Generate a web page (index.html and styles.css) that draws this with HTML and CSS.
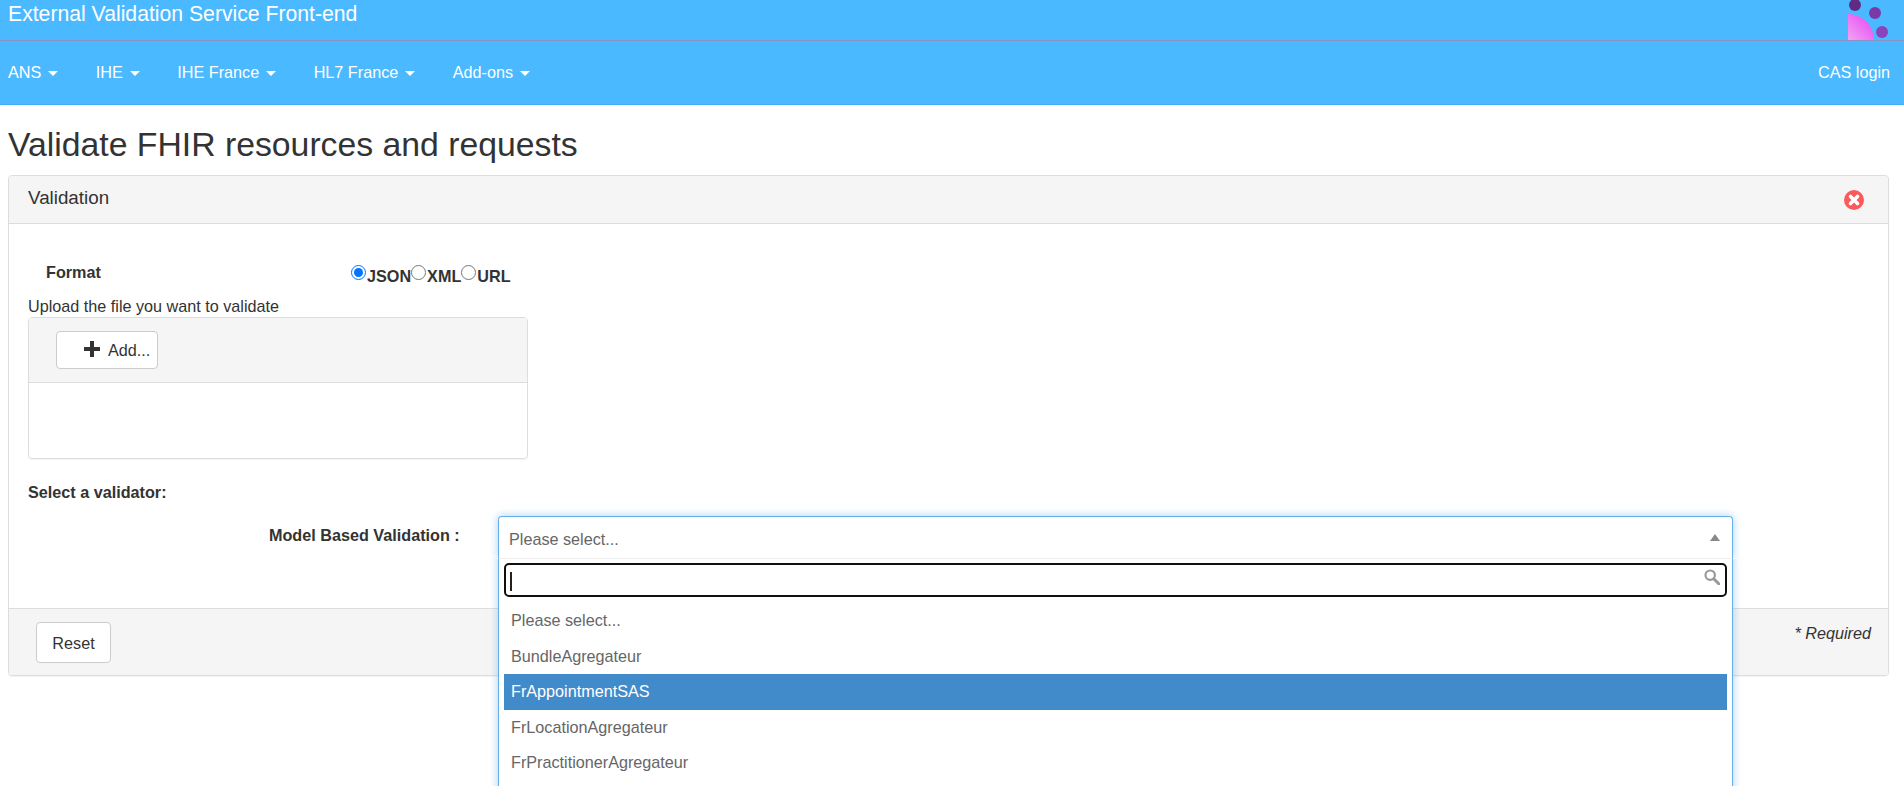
FILE: index.html
```html
<!DOCTYPE html>
<html lang="en">
<head>
<meta charset="utf-8">
<title>Validate FHIR resources and requests</title>
<link rel="stylesheet" href="styles.css">
</head>
<body>
<header class="topbar">
  <div class="brand-row">
    <a class="brand">External Validation Service Front-end</a>
    <svg class="logo" viewBox="0 0 56 40" width="56" height="40" aria-hidden="true">
      <defs>
        <linearGradient id="pink" x1="0" y1="1" x2="1" y2="0">
          <stop offset="0" stop-color="#f2a4f4"/>
          <stop offset="0.6" stop-color="#ea68f2"/>
          <stop offset="1" stop-color="#e050f0"/>
        </linearGradient>
      </defs>
      <path d="M8 14 A26 26 0 0 1 34 40 L8 40 Z" fill="url(#pink)"/>
      <circle cx="15" cy="5" r="6" fill="#5f2b85"/>
      <circle cx="35" cy="13" r="6" fill="#7a3aa6"/>
      <circle cx="42" cy="32" r="6" fill="#8b43bb"/>
    </svg>
  </div>
  <nav class="nav-row">
    <ul class="menu">
      <li class="menu-item">ANS<span class="caret"></span></li>
      <li class="menu-item">IHE<span class="caret"></span></li>
      <li class="menu-item">IHE France<span class="caret"></span></li>
      <li class="menu-item">HL7 France<span class="caret"></span></li>
      <li class="menu-item">Add-ons<span class="caret"></span></li>
    </ul>
    <a class="login">CAS login</a>
  </nav>
</header>
<main class="page">
  <h1 class="title">Validate FHIR resources and requests</h1>
  <section class="panel">
    <div class="panel-head">
      <h2 class="panel-title">Validation</h2>
      <svg class="close" viewBox="0 0 20 20" width="20" height="20" aria-hidden="true">
        <circle cx="10" cy="10" r="10" fill="#fb5a5c"/>
        <path d="M6.5 6.5 L13.5 13.5 M13.5 6.5 L6.5 13.5" stroke="#fff" stroke-width="3.6" stroke-linecap="round"/>
      </svg>
    </div>
    <div class="panel-body">
      <div class="format-row">
        <span class="format-label">Format</span>
        <div class="radios">
          <input class="radio" type="radio" name="format" checked><span class="radio-text">JSON</span>
          <input class="radio" type="radio" name="format"><span class="radio-text">XML</span>
          <input class="radio" type="radio" name="format"><span class="radio-text">URL</span>
        </div>
      </div>
      <div class="upload-label">Upload the file you want to validate</div>
      <div class="upload">
        <div class="upload-head">
          <button class="btn add-btn" type="button">
            <svg class="plus" viewBox="0 0 16 16" width="16" height="16" aria-hidden="true"><path d="M6 0h4v6h6v4h-6v6H6v-6H0V6h6z" fill="#333"/></svg>Add...
          </button>
        </div>
        <div class="upload-body"></div>
      </div>
      <div class="validator-label">Select a validator:</div>
      <div class="validator-row">
        <label class="model-label">Model Based Validation :</label>
        <div class="select">
          <div class="select-box">
            <span class="select-value">Please select...</span>
            <span class="select-arrow"></span>
          </div>
          <div class="dropdown">
            <div class="search">
              <span class="text-cursor"></span>
              <svg class="search-icon" viewBox="0 0 16 16" width="16" height="16" aria-hidden="true">
                <circle cx="6.2" cy="6.2" r="4.7" fill="none" stroke="#999" stroke-width="2.2"/>
                <path d="M9.8 9.8 L15 15" stroke="#999" stroke-width="3" stroke-linecap="round"/>
              </svg>
            </div>
            <ul class="options">
              <li class="option">Please select...</li>
              <li class="option">BundleAgregateur</li>
              <li class="option active">FrAppointmentSAS</li>
              <li class="option">FrLocationAgregateur</li>
              <li class="option">FrPractitionerAgregateur</li>
            </ul>
          </div>
        </div>
      </div>
    </div>
    <div class="panel-foot">
      <button class="btn reset-btn" type="button">Reset</button>
      <em class="required">* Required</em>
    </div>
  </section>
</main>
</body>
</html>
```

FILE: styles.css
```css
* { box-sizing: border-box; }
html, body { height: 100%; }
body {
  margin: 0;
  overflow: hidden;
  background: #fff;
  color: #333;
  font-family: "Liberation Sans", Arial, sans-serif;
  font-size: 16.2px;
  line-height: 20px;
}
.topbar { background: #4ab9ff; color: #fff; border-bottom: 1px solid #3fb0f8; }
.brand-row {
  height: 41px;
  border-bottom: 1px solid #8a90c8;
  display: flex;
  justify-content: space-between;
  padding-left: 8px;
}
.brand { font-size: 21.2px; line-height: 28px; }
.logo { margin-right: 8px; flex: none; }
.nav-row {
  height: 63px;
  display: flex;
  justify-content: space-between;
  align-items: center;
  padding: 0 14px 2px 8px;
}
.menu { list-style: none; margin: 0; padding: 0; display: flex; gap: 37.5px; }
.menu-item { white-space: nowrap; }
.caret {
  display: inline-block;
  margin-left: 7px;
  vertical-align: 2px;
  border-top: 5px solid #fff;
  border-left: 5px solid transparent;
  border-right: 5px solid transparent;
}
.page { padding: 0 15px 0 8px; }
.title {
  margin: 19px 0 11px;
  font-size: 33.75px;
  line-height: 40px;
  font-weight: 400;
  color: #333;
}
.panel {
  border: 1px solid #ddd;
  border-radius: 4px;
  box-shadow: 0 1px 1px rgba(0,0,0,.05);
}
.panel-head {
  height: 48px;
  background: #f5f5f5;
  border-bottom: 1px solid #ddd;
  border-radius: 3px 3px 0 0;
  display: flex;
  justify-content: space-between;
  align-items: center;
  padding: 0 24px 0 19px;
}
.panel-title { margin: -3px 0 0; font-size: 18.8px; font-weight: 400; line-height: 20px; color: #333; }
.close { margin-top: 1px; }
.panel-body { height: 384px; padding: 38px 19px 0; }
.format-row { display: flex; height: 34px; }
.format-label { width: 323px; padding-left: 18px; font-weight: 700; }
.radios { display: flex; align-items: flex-start; font-weight: 700; }
.radio { width: 15px; height: 15px; margin: 3px 1px 0 0; }
.radio-text { margin-top: 4px; }
.upload-label { line-height: 20px; }
.upload {
  width: 500px;
  margin-top: 1px;
  border: 1px solid #ddd;
  border-radius: 4px;
  height: 142px;
  box-shadow: 0 1px 1px rgba(0,0,0,.05);
}
.upload-head {
  height: 65px;
  background: #f5f5f5;
  border-bottom: 1px solid #ddd;
  padding: 13px 27px;
}
.btn {
  display: block;
  background: #fff;
  border: 1px solid #ccc;
  border-radius: 4px;
  color: #333;
  font: inherit;
  padding: 0;
}
.add-btn {
  width: 102px;
  height: 38px;
  display: flex;
  align-items: center;
  padding-left: 27px;
  gap: 8px;
}
.plus { flex: none; margin-top: -3px; }
.validator-label { margin-top: 23px; font-weight: 700; }
.validator-row { display: flex; margin-top: 14px; }
.model-label { width: 470px; padding-left: 241px; font-weight: 700; white-space: nowrap; flex: none; margin-top: 9px; }
.select { position: relative; width: 1235px; flex: none; }
.select-box {
  height: 43px;
  background: #fff;
  border: 1px solid #66afe9;
  border-bottom: 1px solid #eee;
  border-radius: 4px 4px 0 0;
  box-shadow: 0 0 8px rgba(102,175,233,.6);
  display: flex;
  justify-content: space-between;
  align-items: center;
  padding: 3px 12px 0 10px;
  color: #666;
}
.select-arrow {
  border-bottom: 7px solid #888;
  border-left: 5px solid transparent;
  border-right: 5px solid transparent;
  margin-top: -4px;
}
.dropdown {
  position: absolute;
  top: 43px;
  left: 0;
  width: 100%;
  height: 400px;
  padding: 4px 5px 0;
  background: #fff;
  border: 1px solid #66afe9;
  border-top: 0;
  box-shadow: 0 0 8px rgba(102,175,233,.6);
  clip-path: inset(0 -12px -12px -12px);
}
.search {
  height: 34px;
  border: 2px solid #101010;
  border-radius: 5px;
  display: flex;
  justify-content: space-between;
  align-items: center;
  padding: 0 5px 0 4px;
}
.text-cursor { width: 2px; height: 19px; background: #222; margin-top: 2px; }
.search-icon { margin-top: -7px; }
.options { list-style: none; margin: 6px 0 0; padding: 0; color: #666; }
.option { height: 35.6px; line-height: 35px; padding-left: 7px; }
.option.active { background: #428bca; color: #fff; }
.panel-foot {
  height: 67px;
  background: #f5f5f5;
  border-top: 1px solid #ddd;
  border-radius: 0 0 3px 3px;
  display: flex;
  justify-content: space-between;
  padding: 11px 17px 0 27px;
}
.reset-btn { width: 75px; height: 41px; margin-top: 2px; }
.required { margin-top: 3px; }
```
